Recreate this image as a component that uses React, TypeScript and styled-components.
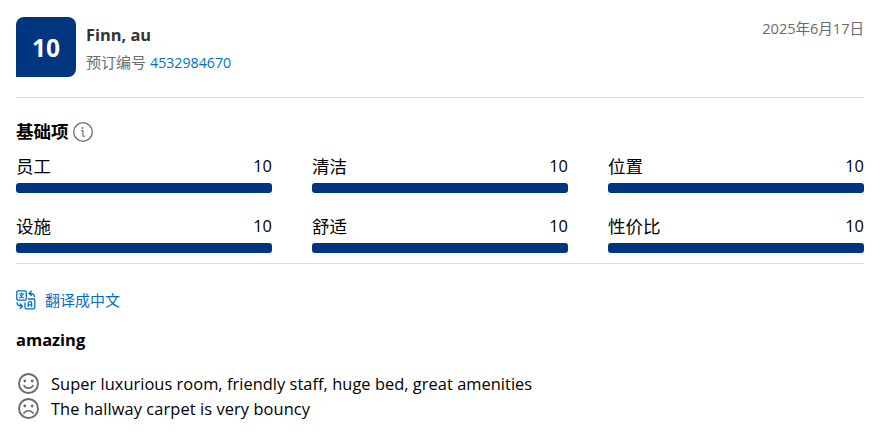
import React from 'react';
import styled, { createGlobalStyle } from 'styled-components';

const GlobalStyle = createGlobalStyle`
  body {
    margin: 0;
    background: #fff;
    color: #000;
    font-family: 'Open Sans', 'Noto Sans CJK SC', sans-serif;
  }
`;

const Review = styled.article`
  box-sizing: border-box;
  width: 889px;
  height: 435px;
  padding: 17px 25px 0 16px;
  overflow: hidden;
`;

const Header = styled.header`
  display: flex;
  height: 80px;
  border-bottom: 1px solid #dcdcdc;
`;

const Score = styled.div`
  width: 60px;
  height: 60px;
  border-radius: 8px 8px 8px 0;
  background: #003580;
  color: #fff;
  font-size: 24.5px;
  font-weight: 700;
  line-height: 62px;
  text-align: center;
`;

const Guest = styled.div`
  flex: 1;
  padding: 4px 0 0 10px;
`;

const GuestName = styled.div`
  color: #333;
  font-size: 16.4px;
  font-weight: 700;
  line-height: 28px;
`;

const Booking = styled.div`
  display: flex;
  gap: 4px;
  color: #6b6b6b;
  font-size: 15px;
  line-height: 27px;
`;

const BookingLink = styled.a`
  color: #0071c2;
  font-size: 14.2px;
`;

const DateText = styled.time`
  color: #6b6b6b;
  font-size: 14.6px;
  line-height: 23px;
  letter-spacing: -0.05px;
`;

const SectionTitle = styled.h2`
  display: flex;
  align-items: flex-start;
  gap: 4px;
  height: 26px;
  margin: 21px 0 7px;
  font-size: 17.5px;
  line-height: 24px;
  font-weight: 700;

  svg {
    margin-top: 3px;
  }
`;

const Ratings = styled.section`
  display: grid;
  grid-template-columns: repeat(3, 256px);
  column-gap: 40px;
  row-gap: 19px;
  height: 111px;
  border-bottom: 1px solid #dcdcdc;
  align-content: start;
`;

const RatingLabel = styled.div`
  box-sizing: border-box;
  display: flex;
  justify-content: space-between;
  height: 31px;
  padding-top: 1px;
  font-size: 17.5px;
  line-height: 26px;
`;

const RatingValue = styled.span`
  font-size: 16.4px;
`;

const Track = styled.div`
  height: 10px;
  border-radius: 3px;
  background: #e6e6e6;
  overflow: hidden;
`;

const Fill = styled.div`
  height: 100%;
  background: #003580;
`;

const Translate = styled.a`
  display: flex;
  align-items: center;
  gap: 9px;
  height: 24px;
  margin-top: 24px;
  color: #0071c2;
  font-size: 15px;
  line-height: 24px;
`;

const Title = styled.h3`
  margin: 15px 0 18px;
  font-size: 16.5px;
  line-height: 26px;
  font-weight: 700;
  letter-spacing: -0.02px;
`;

const Comment = styled.div`
  display: flex;
  align-items: center;
  gap: 12px;
  height: 25px;
  padding-left: 2px;
  font-size: 16.4px;
  line-height: 25px;
`;

const CommentText = styled.span<{ $spacing: number }>`
  letter-spacing: ${(p) => p.$spacing}px;
`;

const InfoIcon = () => (
  <svg width="20" height="20" viewBox="0 0 20 20" fill="none" stroke="#6b6b6b">
    <circle cx="10" cy="10" r="9.3" strokeWidth="1.3" />
    <path d="M8.2 8.7h1.7v4.6c0 .7.3 1 .9 1h1" strokeWidth="1.2" />
    <circle cx="9.6" cy="6" r=".9" fill="#6b6b6b" stroke="none" />
  </svg>
);

const TranslateIcon = () => (
  <svg width="20" height="20" viewBox="0 0 20 20" fill="none" stroke="#0071c2" strokeWidth="1.3" strokeLinecap="round" strokeLinejoin="round">
    <rect x=".8" y=".8" width="9.4" height="9.4" rx="1.2" />
    <path d="M3.2 4h4.6M5.5 3v1M6.9 4.2C6.4 6 5.2 7.3 3.5 7.9M4.5 5.4C5.1 6.6 6.1 7.4 7.6 7.9" strokeWidth="1.1" />
    <path d="M12.3 9h5.2c.8 0 1.3.5 1.3 1.3v7.2c0 .8-.5 1.3-1.3 1.3h-7.2c-.8 0-1.3-.5-1.3-1.3v-4.7" />
    <path d="M12.2 16.6v-3.3c0-2.2 3.4-2.2 3.4 0v3.3M12.2 14.8h3.4" />
    <path d="M18.4 6.5c0-2-1.5-3.2-5.2-3.2M15.4 1.2l-2.4 2.1 2.4 2.1" />
    <path d="M1 12.6c0 2.5 1.5 3.6 5.1 3.6M4.2 14l2.3 2.2-2.3 2.3" />
  </svg>
);

const FaceIcon = ({ happy }: { happy: boolean }) => (
  <svg width="21" height="21" viewBox="0 0 21 21" fill="none" stroke="#6b6b6b" strokeWidth="1.9" strokeLinecap="round">
    <circle cx="10.5" cy="10.5" r="9.5" />
    <circle cx="6.8" cy="8" r="1.4" fill="#6b6b6b" stroke="none" />
    <circle cx="14.2" cy="8" r="1.4" fill="#6b6b6b" stroke="none" />
    <path d={happy ? 'M6 12.6c1.9 3.3 7.1 3.3 9 0' : 'M6 15.2c1.9-3.3 7.1-3.3 9 0'} strokeWidth="1.7" />
  </svg>
);

const ratings = [
  { label: '员工', value: 10 },
  { label: '清洁', value: 10 },
  { label: '位置', value: 10 },
  { label: '设施', value: 10 },
  { label: '舒适', value: 10 },
  { label: '性价比', value: 10 },
];

export default function App() {
  return (
    <>
      <GlobalStyle />
      <Review>
        <Header>
          <Score>10</Score>
          <Guest>
            <GuestName>Finn, au</GuestName>
            <Booking>
              预订编号 <BookingLink>4532984670</BookingLink>
            </Booking>
          </Guest>
          <DateText>2025年6月17日</DateText>
        </Header>
        <SectionTitle>
          基础项 <InfoIcon />
        </SectionTitle>
        <Ratings>
          {ratings.map(({ label, value }) => (
            <div key={label}>
              <RatingLabel>
                {label}
                <RatingValue>{value}</RatingValue>
              </RatingLabel>
              <Track>
                <Fill style={{ width: `${value * 10}%` }} />
              </Track>
            </div>
          ))}
        </Ratings>
        <Translate>
          <TranslateIcon />
          翻译成中文
        </Translate>
        <Title>amazing</Title>
        <Comment>
          <FaceIcon happy />
          <CommentText $spacing={0.045}>Super luxurious room, friendly staff, huge bed, great amenities</CommentText>
        </Comment>
        <Comment>
          <FaceIcon happy={false} />
          <CommentText $spacing={0.09}>The hallway carpet is very bouncy</CommentText>
        </Comment>
      </Review>
    </>
  );
}
